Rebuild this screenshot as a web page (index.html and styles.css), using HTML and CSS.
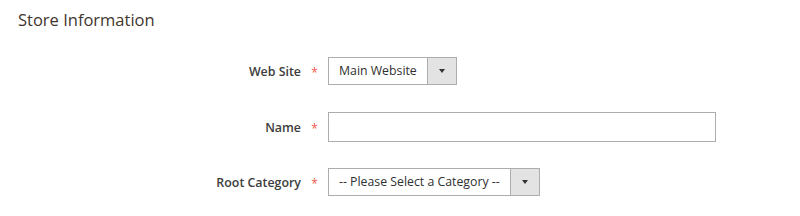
FILE: index.html
```html
<!DOCTYPE html>
<html lang="en">
<head>
    <meta charset="UTF-8">
    <title>Store Information</title>
    <link rel="stylesheet" href="styles.css">
</head>
<body>
    <fieldset class="store-info">
        <legend class="title">Store Information</legend>

        <div class="field site">
            <label class="label">Web Site</label>
            <span class="req">*</span>
            <div class="select wide-site">
                <span class="value">Main Website</span>
                <span class="arrow"></span>
            </div>
        </div>

        <div class="field name">
            <label class="label">Name</label>
            <span class="req">*</span>
            <input type="text" class="input">
        </div>

        <div class="field cat">
            <label class="label">Root Category</label>
            <span class="req">*</span>
            <div class="select wide-cat">
                <span class="value">-- Please Select a Category --</span>
                <span class="arrow"></span>
            </div>
        </div>
    </fieldset>
</body>
</html>
```

FILE: styles.css
```css
* {margin:0;padding:0;box-sizing:border-box;}
body {background:#fff;font-family:"Open Sans","Liberation Sans",sans-serif;color:#303030;}

.store-info {border:0;padding:0;}
.title {display:block;padding:9px 0 0 18px;font-size:16.5px;line-height:22px;color:#41362f;font-weight:400;}

.field {display:flex;align-items:center;height:28px;}
.site {margin-top:26px;}
.name {margin-top:27px;height:30px;}
.cat {margin-top:26px;}

.label {width:301px;text-align:right;font-size:12.4px;font-weight:600;color:#3d3d3d;}
.req {width:27px;text-align:center;color:#eb5a4b;font-size:12px;line-height:1;padding-top:4px;}

.input {width:388px;height:30px;border:1px solid #adadad;background:#fff;}

.select {display:flex;height:28px;border:1px solid #adadad;background:#fff;font-size:12.3px;color:#303030;}
.select .value {flex:1;padding:0 10px;line-height:26px;white-space:nowrap;overflow:hidden;}
.select .arrow {width:29px;background:#e3e3e3;border-left:1px solid #adadad;position:relative;}
.select .arrow::after {content:"";position:absolute;left:11px;top:11px;border-left:3px solid transparent;border-right:3px solid transparent;border-top:4px solid #333;}
.wide-site {width:129px;}
.wide-cat {width:212px;}
```
